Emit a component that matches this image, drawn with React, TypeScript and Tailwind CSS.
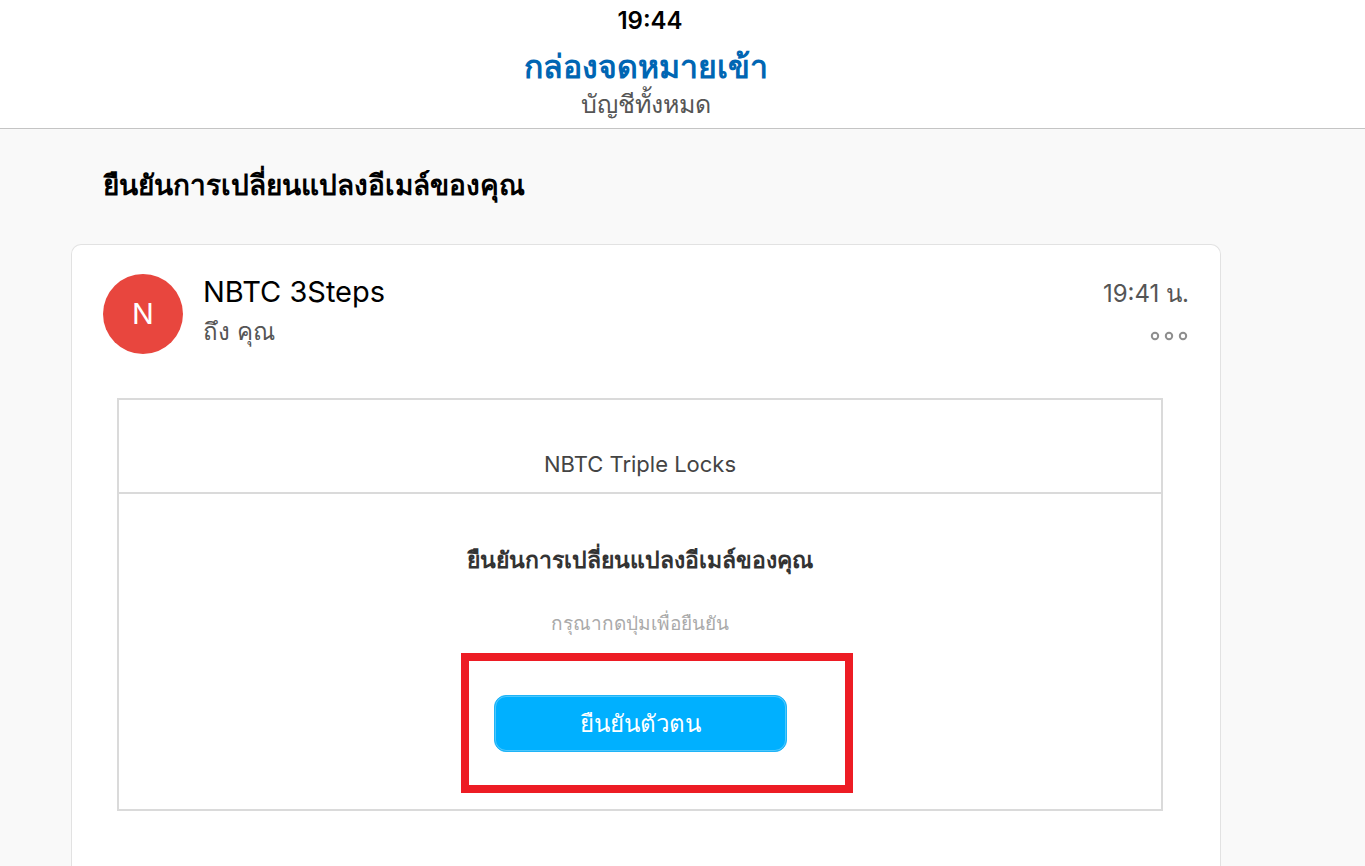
function Header() {
  return (
    <header className="flex h-[129px] flex-col items-center border-b border-[#c4c4c4] bg-white pr-36 pl-[71px] text-center">
      <time className="ml-2 pt-[5px] text-2xl font-semibold text-black">19:44</time>
      <h1 className="mt-1 text-[32px] leading-[52px] font-bold text-[#0066b3]">กล่องจดหมายเข้า</h1>
      <p className="-mt-1 text-[25px] leading-[30px] text-[#555]">บัญชีทั้งหมด</p>
    </header>
  );
}

function MoreButton() {
  return (
    <button type="button" aria-label="เพิ่มเติม" className="mt-[19px]">
      <svg width="39" height="10" viewBox="0 0 39 10" fill="none" stroke="#8e8e8e" strokeWidth="2">
        <circle cx="5" cy="5" r="3.2" />
        <circle cx="19" cy="5" r="3.2" />
        <circle cx="33" cy="5" r="3.2" />
      </svg>
    </button>
  );
}

function Sender() {
  return (
    <div className="flex items-start gap-5 px-[31px] pt-[29px]">
      <div className="flex size-20 shrink-0 items-center justify-center rounded-full bg-[#e8463e] text-[29px] text-white">
        N
      </div>
      <div className="flex-1">
        <p className="text-[29px] leading-9 text-black">NBTC 3Steps</p>
        <p className="mt-1 text-2xl leading-9 text-[#555]">ถึง คุณ</p>
      </div>
      <div className="flex flex-col items-end">
        <time className="mt-0.5 text-2xl leading-9 text-[#555]">19:41 น.</time>
        <MoreButton />
      </div>
    </div>
  );
}

function MessageBody() {
  return (
    <section className="mt-11 mr-[57px] ml-[45px] border-2 border-[#dadada] text-center">
      <div className="border-b-2 border-[#dadada] pt-11 pb-2">
        <p className="text-[22px] leading-10 text-[#444]">NBTC Triple Locks</p>
      </div>
      <h3 className="mt-[46px] text-[23px] leading-10 font-bold text-[#333]">ยืนยันการเปลี่ยนแปลงอีเมล์ของคุณ</h3>
      <p className="mt-7 text-[19px] leading-8 text-[#aaa]">กรุณากดปุ่มเพื่อยืนยัน</p>
      <div className="relative mx-auto mt-[55px] mb-[57px] w-[293px]">
        <button
          type="button"
          className="h-[57px] w-full rounded-xl border border-[#1fb4f7] bg-[#00b0ff] text-2xl text-white inset-ring inset-ring-[#4dc7fd]"
        >
          ยืนยันตัวตน
        </button>
        <div className="pointer-events-none absolute -top-[42px] -right-[66px] -bottom-[41px] -left-[33px] border-8 border-[#ed1c24]" />
      </div>
    </section>
  );
}

export default function App() {
  return (
    <div className="min-h-screen bg-[#f9f9f9] font-['Inter',sans-serif]">
      <Header />
      <main className="pr-36 pl-[71px]">
        <h2 className="px-8 pt-8 pb-[35px] text-[28px] leading-[48px] font-bold text-black">
          ยืนยันการเปลี่ยนแปลงอีเมล์ของคุณ
        </h2>
        <article className="rounded-t-[10px] border border-b-0 border-[#e2e2e2] bg-white pb-14">
          <Sender />
          <MessageBody />
        </article>
      </main>
    </div>
  );
}
